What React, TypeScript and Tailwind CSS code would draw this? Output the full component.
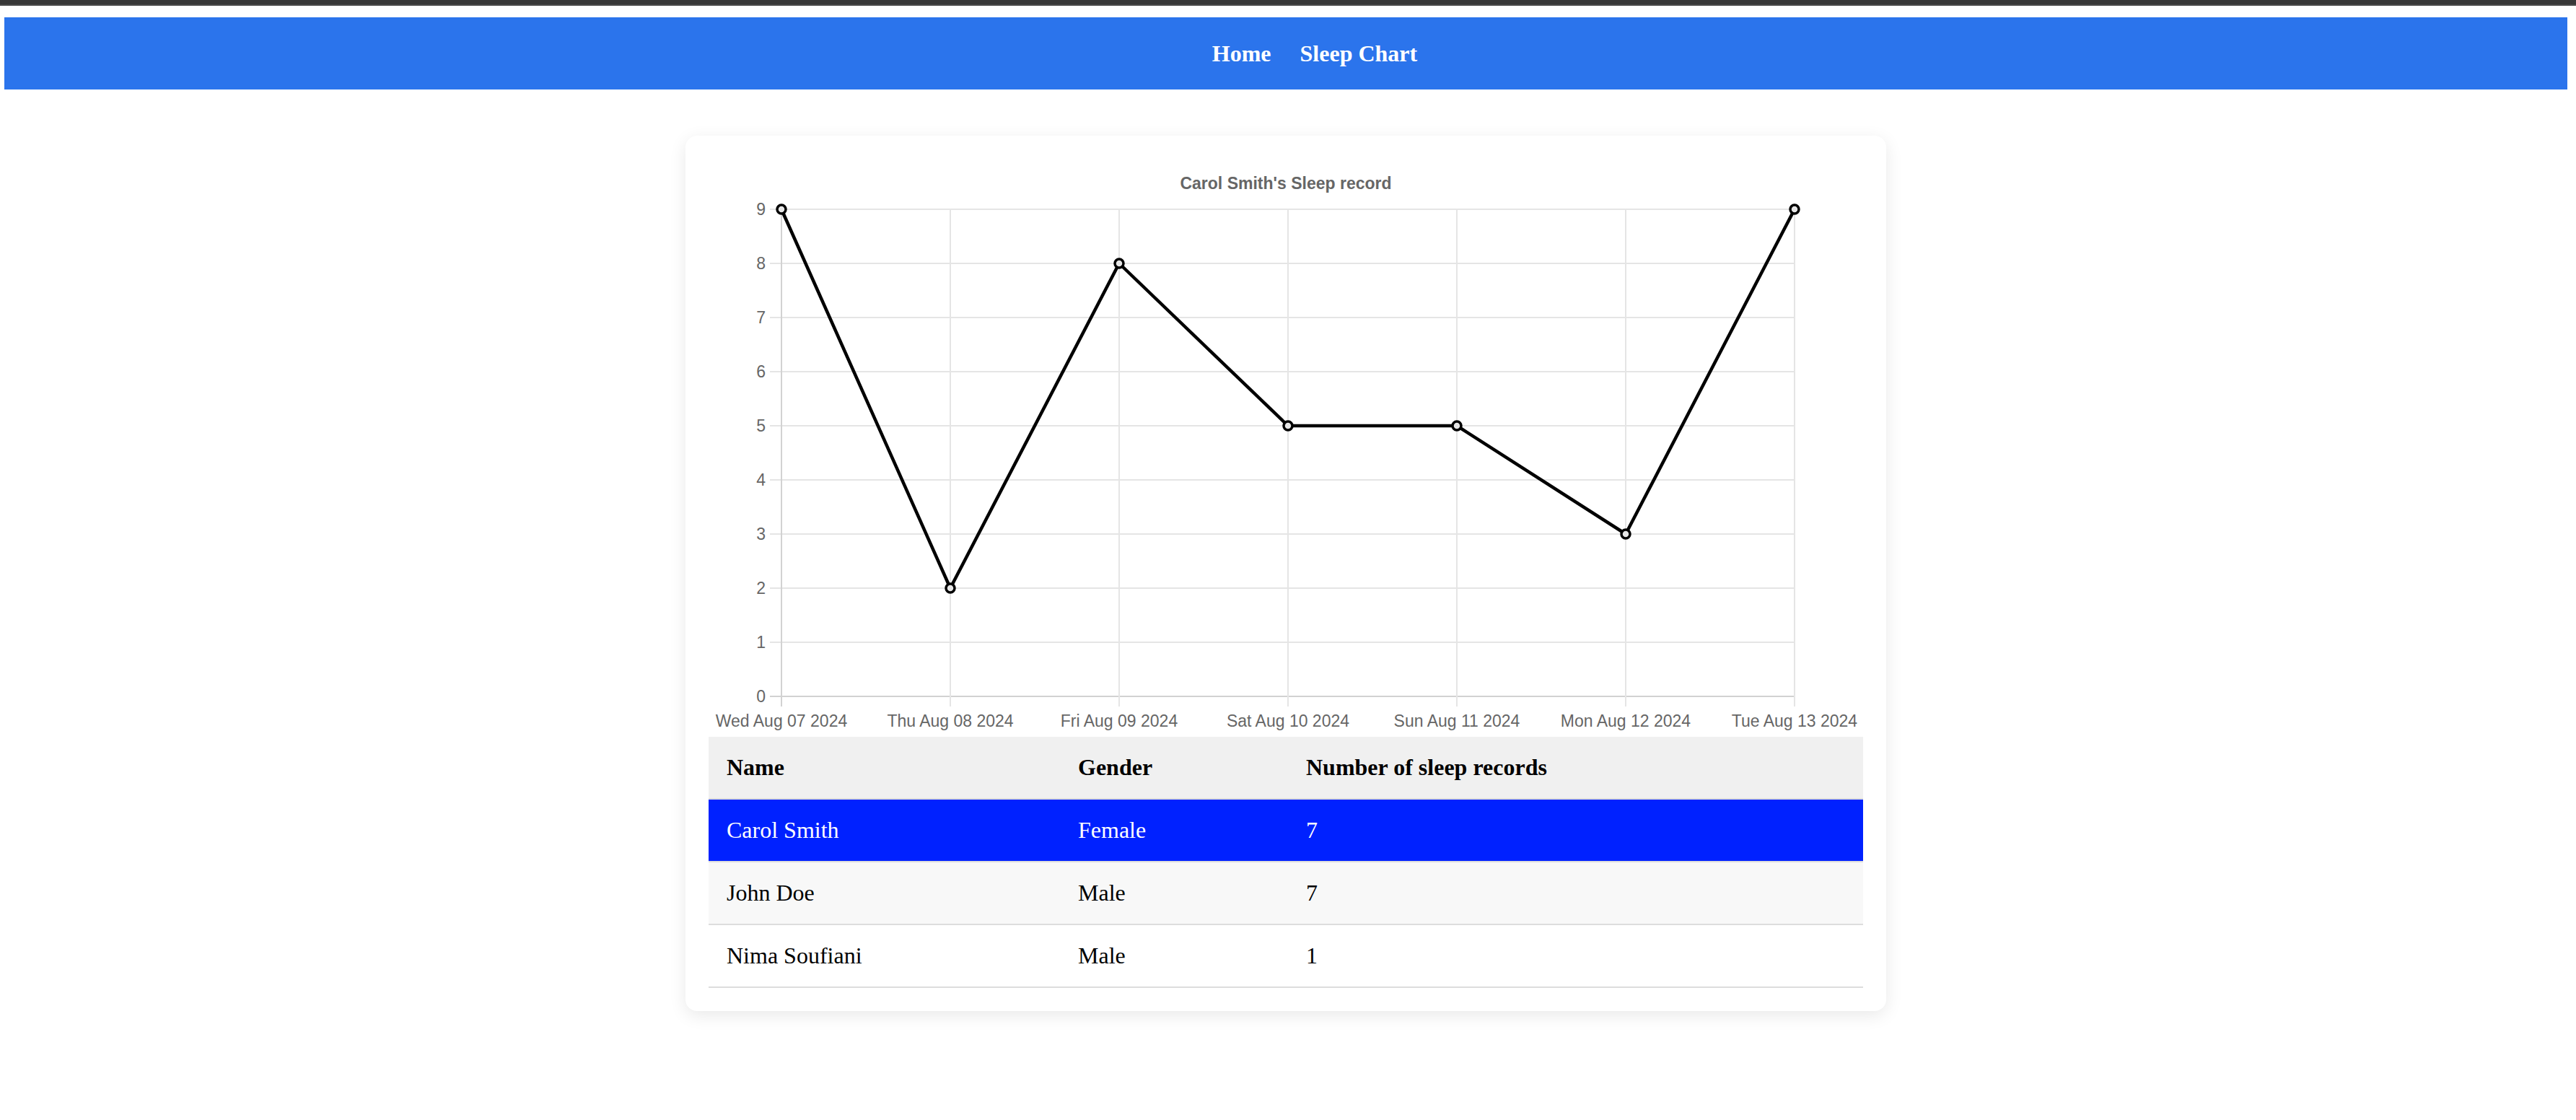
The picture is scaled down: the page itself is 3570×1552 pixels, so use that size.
import React from 'react';

const labels = [
  'Wed Aug 07 2024',
  'Thu Aug 08 2024',
  'Fri Aug 09 2024',
  'Sat Aug 10 2024',
  'Sun Aug 11 2024',
  'Mon Aug 12 2024',
  'Tue Aug 13 2024',
];
const values = [9, 2, 8, 5, 5, 3, 9];

const users = [
  { name: 'Carol Smith', gender: 'Female', count: 7, selected: true },
  { name: 'John Doe', gender: 'Male', count: 7 },
  { name: 'Nima Soufiani', gender: 'Male', count: 1 },
];

// chart area inside the 1600x800 canvas
const left = 101;
const step = 234;
const bottom = 745;
const unit = 75;

const xAt = (i: number) => left + step * i;
const yAt = (v: number) => bottom - unit * v;

const SleepChart: React.FC = () => {
  const points = values.map((v, i) => `${xAt(i)},${yAt(v)}`).join(' ');
  return (
    <svg width={1600} height={800} viewBox="0 0 1600 800" className="block" fontFamily="'Liberation Sans', Arial, sans-serif">
      <text x={800} y={42} textAnchor="middle" fontSize={23} fontWeight={700} fill="#666">
        Carol Smith's Sleep record
      </text>

      {/* horizontal grid + y ticks */}
      {Array.from({ length: 10 }, (_, v) => (
        <g key={v}>
          <line x1={85} x2={xAt(6)} y1={yAt(v)} y2={yAt(v)} stroke={v === 0 ? '#d2d2d2' : '#e5e5e5'} strokeWidth={2} />
          <text x={79} y={yAt(v) + 8} textAnchor="end" fontSize={23} fill="#666">
            {v}
          </text>
        </g>
      ))}

      {/* vertical grid + x ticks */}
      {labels.map((l, i) => (
        <g key={l}>
          <line x1={xAt(i)} x2={xAt(i)} y1={yAt(9)} y2={759} stroke={i === 0 ? '#d2d2d2' : '#e5e5e5'} strokeWidth={2} />
          <text x={xAt(i)} y={787} textAnchor="middle" fontSize={23} fill="#666">
            {l}
          </text>
        </g>
      ))}

      <polyline points={points} fill="none" stroke="#000" strokeWidth={4.5} strokeLinejoin="round" />
      {values.map((v, i) => (
        <circle key={i} cx={xAt(i)} cy={yAt(v)} r={6} fill="#e6e6e6" stroke="#000" strokeWidth={3.5} />
      ))}
    </svg>
  );
};

export default function App() {
  return (
    <div className="min-h-screen bg-white">
      <div className="h-[6px] bg-[#383838]" />
      <div className="h-[2px] bg-[#4a4a4a]" />

      <div className="pl-[6px] pr-[12px] pt-[16px]">
        {/* Navbar */}
        <nav className="h-[100px] bg-[#2b74ec] flex items-center justify-center">
          <ul className="flex items-center gap-[40px] pl-[80px] font-['Liberation_Serif',serif] text-[32px] leading-[37px] font-bold text-white">
            <li>Home</li>
            <li>Sleep Chart</li>
          </ul>
        </nav>

        {/* Card */}
        <div className="mx-auto mt-[64px] w-[1664px] rounded-[16px] bg-white p-[32px] shadow-[0_6px_24px_rgba(0,0,0,0.09)]">
          <SleepChart />

          <table className="mt-[1px] w-[1600px] border-collapse text-left font-['Liberation_Serif',serif] text-[32px] leading-[37px] text-black">
            <thead>
              <tr className="bg-[#f0f0f0] border-b-2 border-[#dddddd]">
                <th className="w-[488px] px-[25px] py-[24px] font-bold">Name</th>
                <th className="w-[316px] px-[24px] py-[24px] font-bold">Gender</th>
                <th className="px-[24px] py-[24px] font-bold">Number of sleep records</th>
              </tr>
            </thead>
            <tbody>
              {users.map((u, idx) => (
                <tr
                  key={u.name}
                  className={`border-b-2 border-[#dddddd] ${
                    u.selected ? 'bg-[#0021ff] text-white' : idx % 2 === 1 ? 'bg-[#f8f8f8]' : 'bg-white'
                  }`}
                >
                  <td className="px-[25px] py-[24px]">{u.name}</td>
                  <td className="px-[24px] py-[24px]">{u.gender}</td>
                  <td className="px-[24px] py-[24px]">{u.count}</td>
                </tr>
              ))}
            </tbody>
          </table>
        </div>
      </div>
    </div>
  );
}
